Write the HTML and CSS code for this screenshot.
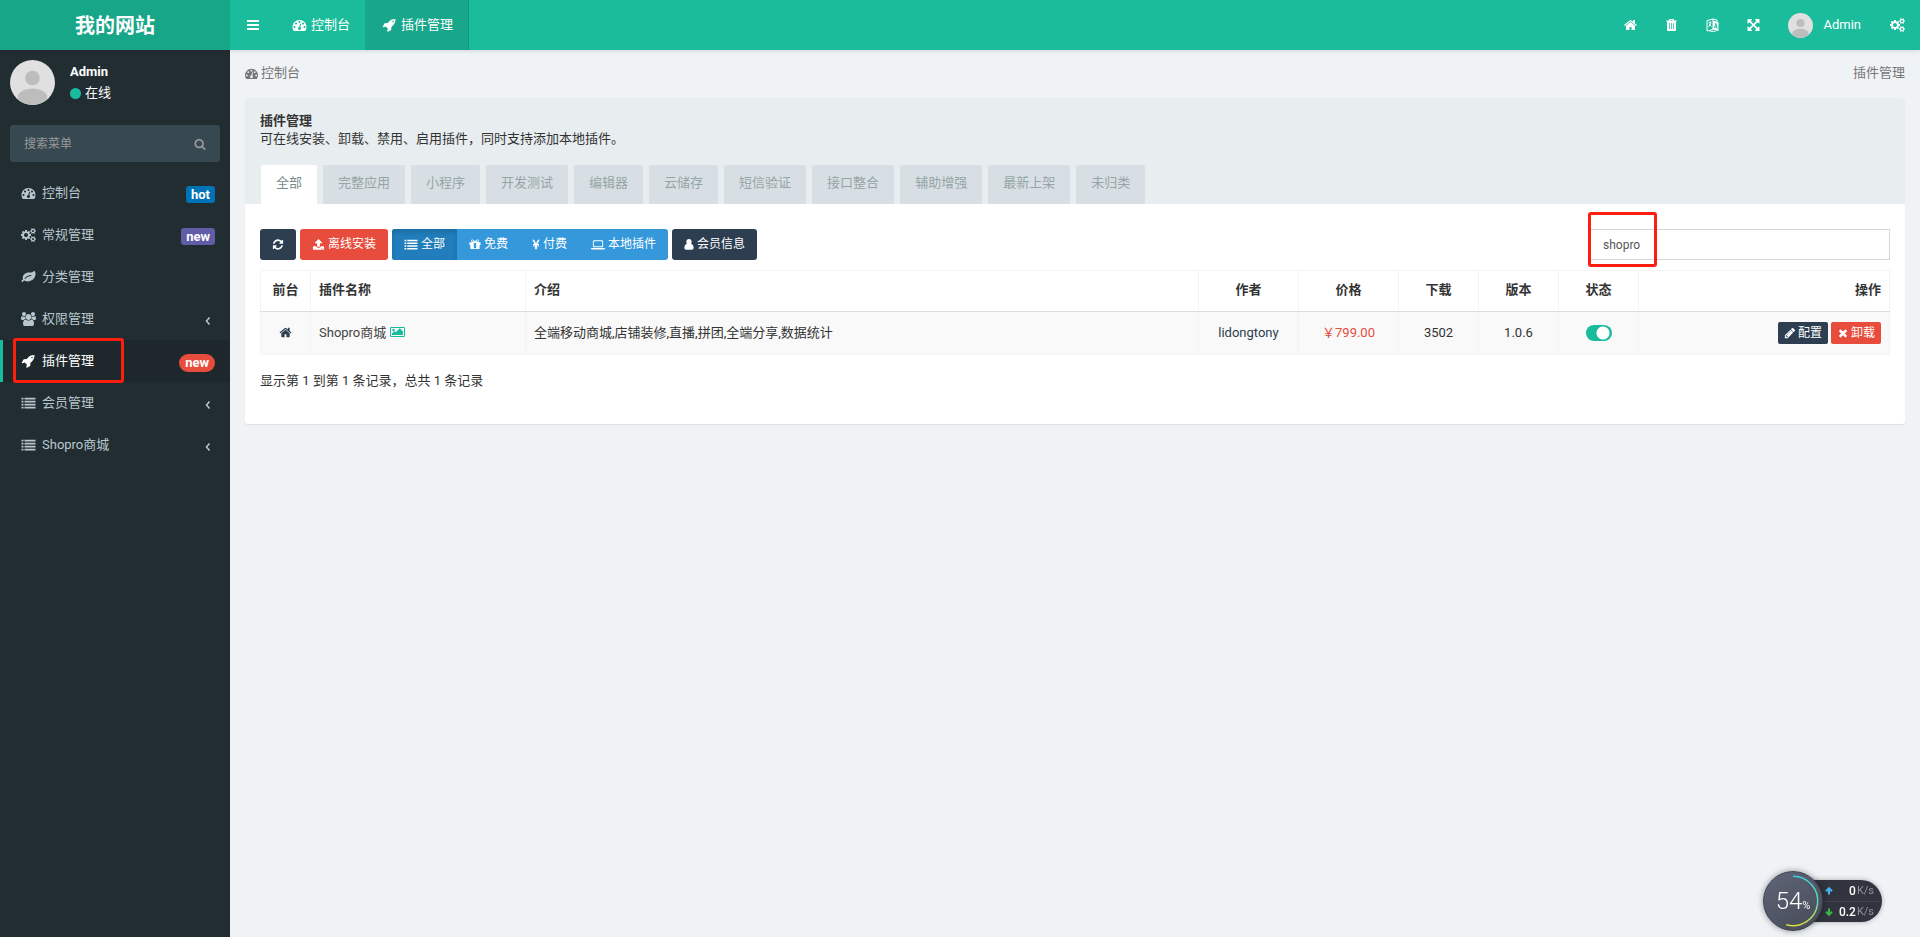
FILE: index.html
```html
<!DOCTYPE html>
<html lang="zh-CN">
<head>
<meta charset="utf-8">
<title>插件管理</title>
<link rel="stylesheet" href="styles.css">
</head>
<body>
<svg class="sprite" aria-hidden="true">
  <symbol id="i-bars" viewBox="0 0 1536 1792"><path d="M0 320q0-64 64-64h1408q64 0 64 64v128q0 64-64 64H64q-64 0-64-64zM0 832q0-64 64-64h1408q64 0 64 64v128q0 64-64 64H64q-64 0-64-64zM0 1344q0-64 64-64h1408q64 0 64 64v128q0 64-64 64H64q-64 0-64-64z"/></symbol>
  <symbol id="i-dash" viewBox="0 0 1792 1792"><path d="M384 1152q0-53-37.500-90.500t-90.500-37.500-90.500 37.500-37.500 90.500 37.500 90.500 90.500 37.500 90.500-37.500 37.500-90.500zm192-448q0-53-37.500-90.500t-90.500-37.500-90.500 37.500-37.500 90.500 37.500 90.500 90.500 37.500 90.500-37.500 37.500-90.500zm428 481l101-382q6-26-7.500-48.500t-38.500-29.500-48 6.500-30 39.500l-101 382q-60 5-107 43.500t-63 98.500q-20 77 20 146t117 89 146-20 89-117q16-60-6-117t-72-91zm660-33q0-53-37.500-90.500t-90.500-37.500-90.500 37.500-37.500 90.500 37.500 90.500 90.500 37.500 90.500-37.500 37.500-90.500zm-640-640q0-53-37.500-90.500t-90.500-37.500-90.500 37.500-37.500 90.500 37.500 90.500 90.500 37.500 90.500-37.500 37.500-90.500zm448 192q0-53-37.500-90.500t-90.500-37.500-90.500 37.500-37.500 90.500 37.500 90.500 90.500 37.500 90.500-37.500 37.500-90.500zm320 448q0 261-141 483-19 29-54 29h-1402q-35 0-54-29-141-221-141-483 0-182 71-348t191-286 286-191 348-71 348 71 286 191 191 286 71 348z"/></symbol>
  <symbol id="i-rocket" viewBox="0 0 1792 1792"><path d="M1440 448q0-40-28-68t-68-28-68 28-28 68 28 68 68 28 68-28 28-68zm224-288q0 249-75.500 430.500t-253.500 360.500q-81 80-195 176l-20 379q-2 16-16 26l-384 224q-7 4-16 4-12 0-23-9l-64-64q-13-14-8-32l85-276-281-281-276 85q-3 1-9 1-14 0-23-9l-64-64q-17-19-5-39l224-384q10-14 26-16l379-20q96-114 176-195 188-187 358-258t431-71q14 0 24 9.500t10 22.500z"/></symbol>
  <symbol id="i-home" viewBox="0 0 1792 1792"><path d="M1472 992v480q0 26-19 45t-45 19h-384v-384h-256v384h-384q-26 0-45-19t-19-45v-480q0-1 .5-3t.5-3l575-474 575 474q1 2 1 6zm223-69l-62 74q-8 9-21 11h-3q-13 0-21-7l-692-577-692 577q-12 8-24 7-13-2-21-11l-62-74q-8-10-7-23.500t11-21.500l719-599q32-26 76-26t76 26l244 204v-195q0-14 9-23t23-9h192q14 0 23 9t9 23v408l219 182q10 8 11 21.500t-7 23.500z"/></symbol>
  <symbol id="i-trash" viewBox="0 0 1792 1792"><path fill-rule="evenodd" d="M640 128h512l96 192h320v128h-96v1088q0 128-128 128H448q-128 0-128-128V448h-96V320h320zM690 320h412l-38-80H728zM576 640v768h96V640zm272 0v768h96V640zm272 0v768h96V640z"/></symbol>
  <symbol id="i-lang" viewBox="0 0 14 14"><path fill="none" stroke="currentColor" d="M1.500 2.500l6-1.500v10.500l-6 1.500zM3 5l3-1M4.500 3.500v1M5.500 5L3 9M3.500 6L6 8.500M4 13l5 .5 2-1M7.500 1l4 1v1.500"/><path fill-rule="evenodd" d="M7.500 2.500l5.500 1.500v9l-5.500-1.500zM10 5L8.500 10l.9.200.3-1 1.300.3.300 1.200.9.200L10.900 5.300zm.2 1.700l.4 1.800-.8-.2z"/></symbol>
  <symbol id="i-expand" viewBox="0 0 1792 1792"><path d="M1411 541l-355 355 355 355 144-144q29-31 70-14 39 17 39 59v448q0 26-19 45t-45 19h-448q-42 0-59-40-17-39 14-69l144-144-355-355-355 355 144 144q31 30 14 69-17 40-59 40h-448q-26 0-45-19t-19-45v-448q0-42 40-59 39-17 69 14l144 144 355-355-355-355-144 144q-19 19-45 19-12 0-24-5-40-17-40-59v-448q0-26 19-45t45-19h448q42 0 59 40 17 39-14 69l-144 144 355 355 355-355-144-144q-31-30-14-69 17-40 59-40h448q26 0 45 19t19 45v448q0 42-39 59-13 5-25 5-26 0-45-19z"/></symbol>
  <symbol id="i-cogs" viewBox="0 0 1920 1792"><path d="M896 896q0-106-75-181t-181-75-181 75-75 181 75 181 181 75 181-75 75-181zm768 512q0-52-38-90t-90-38-90 38-38 90q0 53 37.500 90.500t90.500 37.500 90.500-37.500 37.500-90.500zm0-1024q0-52-38-90t-90-38-90 38-38 90q0 53 37.500 90.500t90.500 37.500 90.500-37.500 37.500-90.500zm-384 421v185q0 10-7 19.500t-16 10.500l-155 24q-11 35-32 76 34 48 90 115 7 11 7 20 0 12-7 19-23 30-82.500 89.500t-78.500 59.500q-11 0-21-7l-115-90q-37 19-77 31-11 108-23 155-7 24-30 24h-186q-11 0-20-7.500t-10-17.500l-23-153q-34-10-75-31l-118 89q-7 7-20 7-11 0-21-8-144-133-144-160 0-9 7-19 10-14 41-53t47-61q-23-44-35-82l-152-24q-10-1-17-9.500t-7-19.500v-185q0-10 7-19.500t16-10.500l155-24q11-35 32-76-34-48-90-115-7-11-7-20 0-12 7-20 22-30 82-89t79-59q11 0 21 7l115 90q34-18 77-32 11-108 23-154 7-24 30-24h186q11 0 20 7.500t10 17.500l23 153q34 10 75 31l118-89q8-7 20-7 11 0 21 8 144 133 144 160 0 8-7 19-12 16-42 54t-45 60q23 48 34 82l152 23q10 2 17 10.500t7 19.500zm640 533v140q0 16-149 31-12 27-30 52 51 113 51 138 0 4-4 7-122 71-124 71-8 0-46-47t-52-68q-20 2-30 2t-30-2q-14 21-52 68t-46 47q-2 0-124-71-4-3-4-7 0-25 51-138-18-25-30-52-149-15-149-31v-140q0-16 149-31 13-29 30-52-51-113-51-138 0-4 4-7 4-2 35-20t59-34 30-16q8 0 46 46.500t52 67.500q20-2 30-2t30 2q51-71 92-112l6-2q4 0 124 70 4 3 4 7 0 25-51 138 17 23 30 52 149 15 149 31zm0-1024v140q0 16-149 31-12 27-30 52 51 113 51 138 0 4-4 7-122 71-124 71-8 0-46-47t-52-68q-20 2-30 2t-30-2q-14 21-52 68t-46 47q-2 0-124-71-4-3-4-7 0-25 51-138-18-25-30-52-149-15-149-31v-140q0-16 149-31 13-29 30-52-51-113-51-138 0-4 4-7 4-2 35-20t59-34 30-16q8 0 46 46.500t52 67.500q20-2 30-2t30 2q51-71 92-112l6-2q4 0 124 70 4 3 4 7 0 25-51 138 17 23 30 52 149 15 149 31z"/></symbol>
  <symbol id="i-leaf" viewBox="0 0 1792 1792"><path d="M1280 704q0-26-19-45t-45-19q-172 0-318 49.500t-259.500 134-235.500 219.500q-19 21-19 45 0 26 19 45t45 19q24 0 45-19 27-24 74-71t67-66q137-124 268.500-176t313.500-52q26 0 45-19t19-45zm512-198q0 95-20 193-46 224-184.500 383t-357.500 268q-214 108-438 108-148 0-286-47-15-5-88-42t-96-37q-16 0-39.500 32t-45 70-52.500 70-60 32q-43 0-63.500-17.500t-45.500-59.500q-2-4-6-11t-5.500-10-3-9.500-1.500-13.500q0-35 31-73.500t68-65.500 68-56 31-48q0-4-14-38t-16-44q-9-51-9-104 0-115 43.500-220t119-184.500 170.500-139 204-95.500q55-18 145-25.500t179.500-9 178.500-6 163.500-24 113.500-56.500l29.500-29.500 29.500-28 27-20 36.500-16 43.500-4.500q39 0 70.500 46t47.500 112 24 124 8 96z"/></symbol>
  <symbol id="i-group" viewBox="0 0 1920 1792"><path d="M593 896q-162 5-265 128h-134q-82 0-138-40.500t-56-118.500q0-353 124-353 6 0 43.500 21t97.500 42.500 119 21.500q67 0 133-23-5 37-5 66 0 139 81 256zm1071 637q0 120-73 189.500t-194 69.500h-874q-121 0-194-69.500t-73-189.500q0-53 3.500-103.500t14-109 26.500-108.500 43-97.500 62-81 85.500-53.500 111.500-20q10 0 43 21.500t73 48 107 48 135 21.500 135-21.500 107-48 73-48 43-21.500q61 0 111.500 20t85.500 53.500 62 81 43 97.500 26.500 108.500 14 109 3.500 103.500zm-1024-1277q0 106-75 181t-181 75-181-75-75-181 75-181 181-75 181 75 75 181zm704 384q0 159-112.500 271.500t-271.500 112.500-271.500-112.500-112.500-271.500 112.500-271.500 271.500-112.500 271.500 112.500 112.500 271.500zm576 225q0 78-56 118.500t-138 40.500h-134q-103-123-265-128 81-117 81-256 0-29-5-66 66 23 133 23 59 0 119-21.500t97.500-42.500 43.500-21q124 0 124 353zm-128-609q0 106-75 181t-181 75-181-75-75-181 75-181 181-75 181 75 75 181z"/></symbol>
  <symbol id="i-list" viewBox="0 0 1792 1792"><path d="M0 224h256v224H0zM384 224h1408v224H384zM0 608h256v224H0zM384 608h1408v224H384zM0 992h256v224H0zM384 992h1408v224H384zM0 1376h256v224H0zM384 1376h1408v224H384z"/></symbol>
  <symbol id="i-left" viewBox="0 0 8 14"><path fill="none" stroke="currentColor" stroke-width="1.500" d="M5.500 3.500L2.500 7l3 3.500"/></symbol>
  <symbol id="i-search" viewBox="0 0 1792 1792"><path d="M1216 832q0-185-131.500-316.500t-316.500-131.500-316.500 131.500-131.500 316.500 131.500 316.500 316.500 131.500 316.500-131.500 131.500-316.500zm512 832q0 52-38 90t-90 38q-54 0-90-38l-343-342q-179 124-399 124-143 0-273.500-55.500t-225-150-150-225-55.500-273.500 55.500-273.500 150-225 225-150 273.500-55.500 273.500 55.500 225 150 150 225 55.500 273.500q0 220-124 399l343 343q37 37 37 90z"/></symbol>
  <symbol id="i-refresh" viewBox="0 0 1792 1792"><path d="M1639 1056q0 5-1 7-64 268-268 434.500t-478 166.500q-146 0-282.500-55t-243.500-157l-129 129q-19 19-45 19t-45-19-19-45v-448q0-26 19-45t45-19h448q26 0 45 19t19 45-19 45l-137 137q71 66 161 102t187 36q134 0 250-65t186-179q11-17 53-117 8-23 30-23h192q13 0 22.500 9.500t9.500 22.500zm25-800v448q0 26-19 45t-45 19h-448q-26 0-45-19t-19-45 19-45l138-138q-148-137-349-137-134 0-250 65t-186 179q-11 17-53 117-8 23-30 23h-199q-13 0-22.500-9.500t-9.500-22.500v-7q65-268 270-434.500t480-166.500q146 0 284 55.500t245 156.500l130-129q19-19 45-19t45 19 19 45z"/></symbol>
  <symbol id="i-upload" viewBox="0 0 1792 1792"><path fill-rule="evenodd" d="M896 128l512 512q30 96-64 96h-256v416q0 64-64 64H768q-64 0-64-64V736H448q-94 0-64-96zM192 1152h392q50 192 184 192h256q134 0 184-192h392q64 0 64 64v320q0 96-96 96H224q-96 0-96-96v-320q0-64 64-64zM1280 1440v96h96v-96zm192 0v96h96v-96z"/></symbol>
  <symbol id="i-gift" viewBox="0 0 1536 1792"><path fill-rule="evenodd" d="M0 640q0-64 64-64h366Q224 560 224 384q0-192 192-192 120 0 190 90l162 200 162-200q70-90 190-90 192 0 192 192 0 176-206 192h366q64 0 64 64v320h-128v448q0 96-96 96H224q-96 0-96-96V960H0zM416 288q-96 0-96 96t96 96h194L500 334q-34-46-84-46zm704 0q-50 0-84 46L926 480h194q96 0 96-96t-96-96zM608 704v720h320V704z"/></symbol>
  <symbol id="i-yen" viewBox="0 0 1024 1792"><path d="M0 256h260l252 500 252-500h260L710 812h220v140H638v90h292v140H638v354H386v-354H94v-140h292v-90H94V812h220z"/></symbol>
  <symbol id="i-laptop" viewBox="0 0 1920 1792"><path fill-rule="evenodd" d="M416 320h1088q160 0 160 160v704q0 96-96 96H352q-96 0-96-96V480q0-160 160-160zm0 128q-32 0-32 32v672h1152V480q0-32-32-32zM0 1376h1920v96q0 96-160 96H160q-160 0-160-96z"/></symbol>
  <symbol id="i-user" viewBox="0 0 1280 1792"><path d="M640 128c220 0 370 160 370 390 0 120-30 220-90 300 230 10 360 250 360 532 0 170-100 270-250 270H250C100 1620 0 1520 0 1350c0-282 130-522 360-532-60-80-90-180-90-300 0-230 150-390 370-390z"/></symbol>
  <symbol id="i-pencil" viewBox="0 0 1792 1792"><path d="M491 1536l91-91-235-235-91 91v107h128v128h107zm523-928q0-22-22-22-10 0-17 7l-542 542q-7 7-7 17 0 22 22 22 10 0 17-7l542-542q7-7 7-17zm-54-192l416 416-832 832h-416v-416zm683 96q0 53-37 90l-166 166-416-416 166-165q36-38 90-38 53 0 91 38l235 234q37 39 37 91z"/></symbol>
  <symbol id="i-times" viewBox="0 0 1792 1792"><path d="M1490 1322q0 40-28 68l-136 136q-28 28-68 28t-68-28l-294-294-294 294q-28 28-68 28t-68-28l-136-136q-28-28-28-68t28-68l294-294-294-294q-28-28-28-68t28-68l136-136q28-28 68-28t68 28l294 294 294-294q28-28 68-28t68 28l136 136q28 28 28 68t-28 68l-294 294 294 294q28 28 28 68z"/></symbol>
  <symbol id="i-image" viewBox="0 0 1920 1792"><path fill-rule="evenodd" d="M160 256h1600q160 0 160 160v960q0 160-160 160H160Q0 1536 0 1376V416q0-160 160-160zm0 128q-32 0-32 32v960q0 32 32 32h1600q32 0 32-32V416q0-32-32-32zM256 1280v-192l320-320 160 160 512-512 416 416v448zM448 480a160 160 0 100 320 160 160 0 100-320z"/></symbol>
  <symbol id="i-avatar" viewBox="0 0 45 45"><circle cx="22.500" cy="22.500" r="22.500" fill="#e0e0e0"/><circle cx="22.500" cy="18" r="7.300" fill="#bdbdbd"/><path fill="#bdbdbd" d="M8 39.500C6 33 14 28.500 22.500 28.500S39 33 37 39.500A22.500 22.500 0 0 1 8 39.500z"/></symbol>
</svg>

<header class="topbar">
  <a class="logo" href="#">我的网站</a>
  <nav class="topnav">
    <button class="toggle" type="button" aria-label="切换菜单"><svg class="icon-bars"><use href="#i-bars"/></svg></button>
    <a class="toptab" href="#"><svg class="icon"><use href="#i-dash"/></svg>控制台</a>
    <a class="toptab active" href="#"><svg class="icon"><use href="#i-rocket"/></svg>插件管理</a>
  </nav>
  <nav class="tools">
    <a class="tool" href="#" aria-label="主页"><svg class="icon"><use href="#i-home"/></svg></a>
    <a class="tool" href="#" aria-label="清除缓存"><svg class="icon"><use href="#i-trash"/></svg></a>
    <a class="tool" href="#" aria-label="语言"><svg class="icon"><use href="#i-lang"/></svg></a>
    <a class="tool" href="#" aria-label="全屏"><svg class="icon"><use href="#i-expand"/></svg></a>
    <a class="account" href="#"><svg class="avatar-small"><use href="#i-avatar"/></svg>Admin</a>
    <a class="settings" href="#" aria-label="设置"><svg class="icon"><use href="#i-cogs"/></svg></a>
  </nav>
</header>

<div class="shell">
  <aside class="sidebar">
    <div class="profile">
      <svg class="avatar"><use href="#i-avatar"/></svg>
      <div><strong>Admin</strong><span class="online">在线</span></div>
    </div>
    <form class="finder">
      <input type="text" placeholder="搜索菜单" aria-label="搜索菜单">
      <button type="button" aria-label="搜索"><svg class="icon-small"><use href="#i-search"/></svg></button>
    </form>
    <nav class="menu">
      <a href="#"><svg class="icon"><use href="#i-dash"/></svg>控制台<span class="tag blue">hot</span></a>
      <a href="#"><svg class="icon"><use href="#i-cogs"/></svg>常规管理<span class="tag purple">new</span></a>
      <a href="#"><svg class="icon"><use href="#i-leaf"/></svg>分类管理</a>
      <a href="#"><svg class="icon"><use href="#i-group"/></svg>权限管理<svg class="caret"><use href="#i-left"/></svg></a>
      <a href="#" class="active"><svg class="icon"><use href="#i-rocket"/></svg>插件管理<span class="tag round">new</span><span class="mark mark-menu"></span></a>
      <a href="#"><svg class="icon"><use href="#i-list"/></svg>会员管理<svg class="caret"><use href="#i-left"/></svg></a>
      <a href="#"><svg class="icon"><use href="#i-list"/></svg>Shopro商城<svg class="caret"><use href="#i-left"/></svg></a>
    </nav>
  </aside>

  <main class="content">
    <div class="crumbs">
      <a href="#"><svg class="icon-crumb"><use href="#i-dash"/></svg>控制台</a>
      <span>插件管理</span>
    </div>
    <section class="panel">
      <div class="panel-head">
        <h1>插件管理</h1>
        <p>可在线安装、卸载、禁用、启用插件，同时支持添加本地插件。</p>
        <nav class="tabs">
          <a class="active" href="#">全部</a>
          <a href="#">完整应用</a>
          <a href="#">小程序</a>
          <a href="#">开发测试</a>
          <a href="#">编辑器</a>
          <a href="#">云储存</a>
          <a href="#">短信验证</a>
          <a href="#">接口整合</a>
          <a href="#">辅助增强</a>
          <a href="#">最新上架</a>
          <a href="#">未归类</a>
        </nav>
      </div>
      <div class="panel-body">
        <div class="toolbar">
          <button class="btn dark" type="button" aria-label="刷新"><svg class="icon-btn"><use href="#i-refresh"/></svg></button>
          <button class="btn red" type="button"><svg class="icon-upload"><use href="#i-upload"/></svg>离线安装</button>
          <div class="group">
            <button class="btn pressed" type="button"><svg class="icon-list"><use href="#i-list"/></svg>全部</button>
            <button class="btn" type="button"><svg class="icon-btn"><use href="#i-gift"/></svg>免费</button>
            <button class="btn" type="button"><svg class="icon-yen"><use href="#i-yen"/></svg>付费</button>
            <button class="btn" type="button"><svg class="icon-list"><use href="#i-laptop"/></svg>本地插件</button>
          </div>
          <button class="btn dark" type="button"><svg class="icon-user"><use href="#i-user"/></svg>会员信息</button>
          <div class="search">
            <input type="text" value="shopro" aria-label="搜索插件">
            <span class="mark mark-search"></span>
          </div>
        </div>
        <table class="plugins">
          <colgroup><col class="c-front"><col class="c-name"><col><col class="c-wide"><col class="c-wide"><col class="c-mid"><col class="c-mid"><col class="c-mid"><col class="c-ops"></colgroup>
          <thead>
            <tr><th>前台</th><th class="left">插件名称</th><th class="left">介绍</th><th>作者</th><th>价格</th><th>下载</th><th>版本</th><th>状态</th><th class="right">操作</th></tr>
          </thead>
          <tbody>
            <tr>
              <td><a class="link" href="#" aria-label="前台"><svg class="icon-cell"><use href="#i-home"/></svg></a></td>
              <td class="left"><a class="name" href="#">Shopro商城 <svg class="icon-image"><use href="#i-image"/></svg></a></td>
              <td class="left">全端移动商城,店铺装修,直播,拼团,全端分享,数据统计</td>
              <td><a class="link" href="#">lidongtony</a></td>
              <td class="price">￥799.00</td>
              <td>3502</td>
              <td>1.0.6</td>
              <td><input class="switch" type="checkbox" checked aria-label="状态"></td>
              <td class="right"><div class="ops"><button class="mini dark" type="button"><svg class="icon-mini"><use href="#i-pencil"/></svg>配置</button><button class="mini red" type="button"><svg class="icon-mini"><use href="#i-times"/></svg>卸载</button></div></td>
            </tr>
          </tbody>
        </table>
        <p class="summary">显示第 1 到第 1 条记录，总共 1 条记录</p>
      </div>
    </section>
  </main>
</div>

<div class="meter">
  <div class="dial">
    <svg class="ring" viewBox="0 0 60 60"><defs><linearGradient id="arc" x1="0" y1="0" x2="0" y2="1"><stop offset="0" stop-color="#3fd3dc"/><stop offset=".5" stop-color="#5fdcb0"/><stop offset="1" stop-color="#d9de3c"/></linearGradient></defs><path d="M30 4.500A25.500 25.500 0 1 1 23 54.500" fill="none" stroke="url(#arc)" stroke-width="1.500"/></svg>
    <span class="percent">54</span><small>%</small>
  </div>
  <div class="rates">
    <div><svg class="arrow up" viewBox="0 0 8 8"><path d="M4 7.500V1.500M1 4.200l3-3 3 3"/></svg><b>0</b><span>K/s</span></div>
    <div><svg class="arrow down" viewBox="0 0 8 8"><path d="M4 .5v6M1 3.800l3 3 3-3"/></svg><b>0.2</b><span>K/s</span></div>
  </div>
</div>
</body>
</html>
```
FILE: styles.css
```css
* { box-sizing: border-box; }
body {
  margin: 0;
  min-height: 100vh;
  display: flex;
  flex-direction: column;
  background: #eff3f6;
  color: #333;
  font: 13px/18px Roboto, "Noto Sans CJK SC", sans-serif;
}
a { color: inherit; text-decoration: none; }
button, input { font: inherit; }
button { border: 0; background: none; color: inherit; padding: 0; cursor: pointer; }
svg { fill: currentColor; flex: none; }
.sprite { position: absolute; width: 0; height: 0; }
.icon { width: 15px; height: 14px; }
.icon-bars { width: 12px; height: 14px; }
.icon-small { width: 12px; height: 12px; }
.icon-btn { width: 12px; height: 13px; }
.icon-upload { width: 13px; height: 13px; }
.icon-list { width: 14px; height: 13px; }
.icon-yen { width: 8px; height: 13px; }
.icon-user { width: 10px; height: 13px; }
.icon-mini { width: 12px; height: 12px; }
.icon-crumb { width: 13px; height: 13px; }
.icon-cell { width: 13px; height: 13px; vertical-align: -2px; }
.icon-image { width: 15px; height: 14px; vertical-align: -2px; color: #18bc9c; }

/* top bar */
.topbar {
  position: relative;
  z-index: 1;
  display: flex;
  height: 50px;
  color: #fff;
  background: #1abc9c;
  box-shadow: 0 1px 4px rgba(0, 21, 41, .12);
}
.logo {
  width: 230px;
  padding-top: 2px;
  background: #18a689;
  font-size: 20px;
  font-weight: 700;
  line-height: 48px;
  text-align: center;
}
.topnav { display: flex; flex: 1; }
.toggle { width: 45px; display: flex; align-items: center; justify-content: center; }
.toptab { display: flex; align-items: center; gap: 4px; padding: 0 15px 1px 17px; }
.toptab.active { background: #18a78b; border-right: 1px solid #16957c; }
.tools { display: flex; }
.tools a { display: flex; align-items: center; }
.tool { width: 41px; justify-content: center; }
.account { gap: 10px; padding: 0 11px 0 14px; }
.settings { padding: 0 15px 0 18px; }
.avatar-small { width: 25px; height: 25px; }

/* sidebar */
.shell { display: flex; flex: 1; }
.sidebar { width: 230px; flex: none; background: #222d32; color: #fff; }
.profile { display: flex; gap: 15px; padding: 10px; height: 65px; }
.avatar { width: 45px; height: 45px; }
.profile strong { display: block; margin: 3px 0; }
.online { display: flex; align-items: center; gap: 4px; }
.online::before { content: ""; width: 11px; height: 11px; border-radius: 50%; background: #18bc9c; }
.finder { display: flex; height: 37px; margin: 10px 10px; border-radius: 3px; background: #374850; color: #999; }
.finder input { flex: 1; min-width: 0; border: 0; outline: 0; background: none; padding: 0 14px; font-size: 12px; color: #fff; }
.finder input::placeholder { color: #999; }
.finder button { width: 40px; display: flex; align-items: center; justify-content: center; }
.menu a {
  position: relative;
  display: flex;
  align-items: center;
  gap: 6px;
  height: 42px;
  padding: 0 15px 1px 18px;
  border-left: 3px solid transparent;
  color: #b8c7ce;
}
.menu a.active { border-left-color: #18bc9c; background: #1e282c; color: #fff; }
.tag {
  margin: 4px 0 0 auto;
  padding: 0 5px;
  border-radius: 3px;
  color: #fff;
  font-size: 13px;
  font-weight: 700;
  line-height: 17px;
}
.blue { background: #0073b7; }
.purple { background: #605ca8; }
.round { background: #e74c3c; padding: 0 6px; border-radius: 9px; line-height: 18px; }
.caret { width: 8px; height: 14px; margin: 5px 3px 0 auto; }
.mark { position: absolute; border: 3px solid #ff1d0f; border-radius: 3px; pointer-events: none; }
.mark-menu { left: 10px; top: -2px; width: 111px; height: 45px; }

/* main column */
.content { flex: 1; min-width: 0; padding: 14px 15px 15px; }
.crumbs { display: flex; justify-content: space-between; margin-bottom: 16px; color: #777; }
.crumbs a { display: flex; align-items: center; gap: 3px; }
.panel { background: #fff; border-radius: 3px; box-shadow: 0 1px 1px rgba(0, 0, 0, .08); }
.panel-head { padding: 14px 15px 0; background: #e8edf0; border-radius: 3px 3px 0 0; }
.panel-head h1 { margin: 0; font-size: 13px; line-height: 18px; }
.panel-head p { margin: 0 0 17px; }
.tabs { display: flex; gap: 6px; padding-left: 1px; }
.tabs a {
  height: 39px;
  padding: 0 15px;
  border-radius: 2px 2px 0 0;
  background: #d8dfe4;
  color: #95a5a6;
  line-height: 36px;
}
.tabs .active { background: #fff; color: #7b8a8b; }
.panel-body { padding: 25px 15px 34px; }
.toolbar { display: flex; gap: 4px; margin-bottom: 10px; }
.btn {
  display: flex;
  align-items: center;
  gap: 3px;
  height: 31px;
  padding: 0 12px 1px;
  border-radius: 3px;
  color: #fff;
  font-size: 12px;
}
.group { display: flex; border-radius: 3px; background: #3498db; }
.group .pressed { background: #217dbb; border-radius: 3px 0 0 3px; box-shadow: inset 0 3px 5px rgba(0, 0, 0, .13); }
.dark { background: #2c3e50; }
.red { background: #e74c3c; }
.search { position: relative; width: 301px; margin-left: auto; }
.search input {
  width: 100%;
  height: 31px;
  padding: 0 13px;
  border: 1px solid #d2d6de;
  outline: 0;
  color: #555;
  font-size: 12px;
}
.mark-search { left: -1px; top: -17px; width: 69px; height: 55px; }

.plugins { width: 100%; table-layout: fixed; border-collapse: collapse; }
.c-front { width: 50px; }
.c-name { width: 215px; }
.c-wide { width: 100px; }
.c-mid { width: 80px; }
.c-ops { width: 251px; }
.plugins th, .plugins td { height: 41px; padding: 0 8px; border: 1px solid #f4f4f4; text-align: center; }
.plugins th { border-bottom: 1px solid #ddd; padding-bottom: 2px; }
.plugins td { height: 43px; background: #f9f9f9; }
.plugins .left { text-align: left; }
.plugins .right { text-align: right; }
.link { color: #2c3e50; }
.name { color: #444; }
.plugins .price { color: #e74c3c; }
.switch {
  appearance: none;
  display: block;
  width: 26px;
  height: 16px;
  margin: 0 auto;
  border-radius: 8px;
  background: radial-gradient(circle at 17px 8px, #fff 6px, #18bc9c 7px);
}
.ops { display: flex; justify-content: flex-end; gap: 3px; }
.mini {
  display: flex;
  align-items: center;
  gap: 2px;
  height: 22px;
  padding: 0 6px;
  border-radius: 2px;
  color: #fff;
  font-size: 12px;
}
.summary { margin: 17px 0 0; }

/* network meter */
.meter { position: fixed; right: 38px; bottom: 6px; display: flex; align-items: center; }
.dial {
  position: relative;
  z-index: 1;
  display: flex;
  align-items: baseline;
  justify-content: center;
  width: 60px;
  height: 60px;
  border: 1px solid #3b3f4a;
  border-radius: 50%;
  background: linear-gradient(150deg, #5f6577, #464a58);
  box-shadow: 0 0 6px rgba(0, 0, 0, .4);
  color: #fff;
  line-height: 58px;
}
.ring { position: absolute; inset: 0; width: 58px; height: 58px; }
.percent { font-size: 24px; font-weight: 300; }
.dial small { font-size: 11px; }
.rates {
  width: 76px;
  margin-left: -17px;
  border-radius: 0 21px 21px 0;
  background: #31343e;
  box-shadow: 0 0 5px rgba(0, 0, 0, .3);
  color: #fff;
}
.rates div { display: flex; align-items: center; height: 21px; padding: 0 8px 0 19px; }
.rates div + div { border-top: 1px solid #3e424d; }
.rates b { margin-left: auto; font-size: 12px; font-weight: 500; }
.rates span { margin-left: 1px; color: #8f939e; font-size: 11px; }
.arrow { width: 8px; height: 8px; fill: none; stroke-width: 2; }
.up { stroke: #45b6f0; }
.down { stroke: #35b847; }
```
